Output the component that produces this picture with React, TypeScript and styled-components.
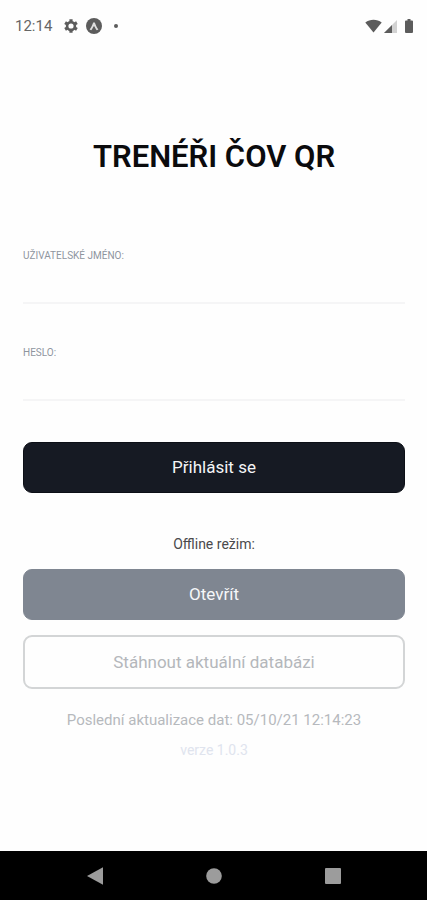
import React from "react";
import styled, { createGlobalStyle } from "styled-components";

const GlobalStyle = createGlobalStyle`
  *, *::before, *::after { box-sizing: border-box; }
  body { margin: 0; background: #fefefe; font-family: Roboto, "Liberation Sans", sans-serif; }
`;

const Screen = styled.div`
  display: flex;
  flex-direction: column;
  min-height: 100vh;
`;

const StatusBar = styled.header`
  display: flex;
  align-items: center;
  justify-content: space-between;
  height: 52px;
  padding: 0 14px 0 15px;
  color: #5c5c5c;
`;

const StatusGroup = styled.div<{ $gap: number }>`
  display: flex;
  align-items: center;
  gap: ${(p) => p.$gap}px;
`;

const Clock = styled.time`
  margin-right: 4px;
  font-size: 15px;
  line-height: 20px;
  color: #666;
`;

const Content = styled.main`
  flex: 1;
  display: flex;
  flex-direction: column;
  padding: 87px 22px 24px 23px;
`;

const Title = styled.h1`
  margin: 0 0 73px;
  font-size: 31px;
  font-weight: 600;
  line-height: 36px;
  text-align: center;
  color: #0b0b0d;
`;

const LoginForm = styled.form`
  display: flex;
  flex-direction: column;
`;

const Field = styled.div`
  display: flex;
  flex-direction: column;
  margin-bottom: 41px;
`;

const Label = styled.label`
  font-size: 10px;
  line-height: 16px;
  color: #8e959e;
`;

const Input = styled.input`
  width: 100%;
  height: 40px;
  padding: 0;
  border: 0;
  border-bottom: 2px solid #f5f5f6;
  border-radius: 0;
  outline: 0;
  background: transparent;
  font: inherit;
  font-size: 16px;
  color: #161a23;
`;

const buttonColors = {
  primary: { background: "#161a23", color: "#f4f5f6", border: "#0c0f16" },
  secondary: { background: "#7f8691", color: "#f6f7f9", border: "#7f8691" },
  outline: { background: "transparent", color: "#b4b7bb", border: "#d3d5d6" },
};

const Button = styled.button<{ $variant: keyof typeof buttonColors }>`
  width: 100%;
  padding: ${(p) => (p.$variant === "outline" ? 15 : 14)}px 16px;
  border: ${(p) => (p.$variant === "outline" ? 2 : 1)}px solid
    ${(p) => buttonColors[p.$variant].border};
  border-radius: 9px;
  background: ${(p) => buttonColors[p.$variant].background};
  color: ${(p) => buttonColors[p.$variant].color};
  font-family: inherit;
  font-size: 17px;
  line-height: ${(p) => (p.$variant === "outline" ? 20 : 21)}px;
  cursor: pointer;
`;

const OfflineSection = styled.section`
  display: flex;
  flex-direction: column;
  gap: 15px;
  margin-top: 41px;
`;

const OfflineTitle = styled.h2`
  margin: 0;
  font-size: 14px;
  font-weight: 400;
  line-height: 20px;
  text-align: center;
  color: #4a4a4c;
`;

const Note = styled.p<{ $faint?: boolean }>`
  margin: 0;
  font-size: ${(p) => (p.$faint ? 14 : 15)}px;
  line-height: 20px;
  text-align: center;
  color: ${(p) => (p.$faint ? "#e0e4ee" : "#b6b9bd")};
`;

const Notes = styled.footer`
  display: flex;
  flex-direction: column;
  gap: 10px;
  margin-top: 21px;
`;

const NavBar = styled.nav`
  display: grid;
  grid-template-columns: repeat(3, 1fr);
  height: 49px;
  padding: 0 35px;
  background: #000;
`;

const NavButton = styled.button`
  display: flex;
  align-items: center;
  justify-content: center;
  padding: 0;
  border: 0;
  background: transparent;
  color: #9c9c9c;
  cursor: pointer;
`;

const GearIcon = () => (
  <svg width="14" height="14" viewBox="0 0 14 14" fill="none" stroke="currentColor" aria-hidden="true">
    <circle cx="7" cy="7" r="3.900" strokeWidth="2.600" />
    <path
      d="M7 .2v2.400M7 11.400v2.400M1.100 3.600l2 1.200M10.900 9.200l2 1.200M1.100 10.400l2-1.200M10.900 4.800l2-1.200"
      strokeWidth="3.200"
    />
  </svg>
);

const BadgeIcon = () => (
  <svg width="16" height="16" viewBox="0 0 16 16" aria-hidden="true">
    <circle cx="8" cy="8" r="8" fill="currentColor" />
    <path
      d="M3.6 11.4C5.2 9.6 6 7.4 7 5c.4-1 1.6-1 2 0 1 2.400 1.800 4.600 3.400 6.400l-1.600.9C9.800 11.200 9 9.300 8 7.900 7 9.300 6.200 11.200 5.200 12.300z"
      fill="#ddd"
    />
  </svg>
);

const DotIcon = () => (
  <svg width="4" height="4" viewBox="0 0 4 4" aria-hidden="true">
    <circle cx="2" cy="2" r="2" fill="currentColor" />
  </svg>
);

const WifiIcon = () => (
  <svg width="17" height="14" viewBox="0 0 17 14" aria-hidden="true">
    <path d="M.3 3.600C5-.2 12-.2 16.700 3.600L8.500 13.500z" fill="currentColor" />
  </svg>
);

const SignalIcon = () => (
  <svg width="13" height="13" viewBox="0 0 13 13" aria-hidden="true">
    <path d="M13 0v13H0z" fill="#d2d2d2" />
    <path d="M8 5v8H0z" fill="currentColor" />
  </svg>
);

const BatteryIcon = () => (
  <svg width="8" height="14" viewBox="0 0 8 14" aria-hidden="true">
    <path
      d="M2.500 0h3v1.400H7a1 1 0 0 1 1 1V13a1 1 0 0 1-1 1H1a1 1 0 0 1-1-1V2.400a1 1 0 0 1 1-1h1.500z"
      fill="currentColor"
    />
  </svg>
);

const BackIcon = () => (
  <svg width="16" height="18" viewBox="0 0 16 18" aria-hidden="true">
    <path d="M0 9L16 .3v17.400z" fill="currentColor" />
  </svg>
);

const HomeIcon = () => (
  <svg width="16" height="16" viewBox="0 0 16 16" aria-hidden="true">
    <circle cx="8" cy="8" r="7.800" fill="currentColor" />
  </svg>
);

const RecentsIcon = () => (
  <svg width="16" height="16" viewBox="0 0 16 16" aria-hidden="true">
    <rect width="16" height="16" rx="1" fill="currentColor" />
  </svg>
);

export default function App() {
  return (
    <>
      <GlobalStyle />
      <Screen>
        <StatusBar>
          <StatusGroup $gap={12}>
            <StatusGroup $gap={8}>
              <Clock>12:14</Clock>
              <GearIcon />
              <BadgeIcon />
            </StatusGroup>
            <DotIcon />
          </StatusGroup>
          <StatusGroup $gap={8}>
            <StatusGroup $gap={2}>
              <WifiIcon />
              <SignalIcon />
            </StatusGroup>
            <BatteryIcon />
          </StatusGroup>
        </StatusBar>

        <Content>
          <Title>TRENÉŘI ČOV QR</Title>

          <LoginForm onSubmit={(e) => e.preventDefault()}>
            <Field>
              <Label htmlFor="username">UŽIVATELSKÉ JMÉNO:</Label>
              <Input id="username" type="text" autoComplete="username" />
            </Field>
            <Field>
              <Label htmlFor="password">HESLO:</Label>
              <Input id="password" type="password" autoComplete="current-password" />
            </Field>
            <Button type="submit" $variant="primary">
              Přihlásit se
            </Button>
          </LoginForm>

          <OfflineSection>
            <OfflineTitle>Offline režim:</OfflineTitle>
            <Button type="button" $variant="secondary">
              Otevřít
            </Button>
            <Button type="button" $variant="outline">
              Stáhnout aktuální databázi
            </Button>
          </OfflineSection>

          <Notes>
            <Note>Poslední aktualizace dat: 05/10/21 12:14:23</Note>
            <Note $faint>verze 1.0.3</Note>
          </Notes>
        </Content>

        <NavBar>
          <NavButton type="button" aria-label="Zpět">
            <BackIcon />
          </NavButton>
          <NavButton type="button" aria-label="Domů">
            <HomeIcon />
          </NavButton>
          <NavButton type="button" aria-label="Přehled">
            <RecentsIcon />
          </NavButton>
        </NavBar>
      </Screen>
    </>
  );
}
